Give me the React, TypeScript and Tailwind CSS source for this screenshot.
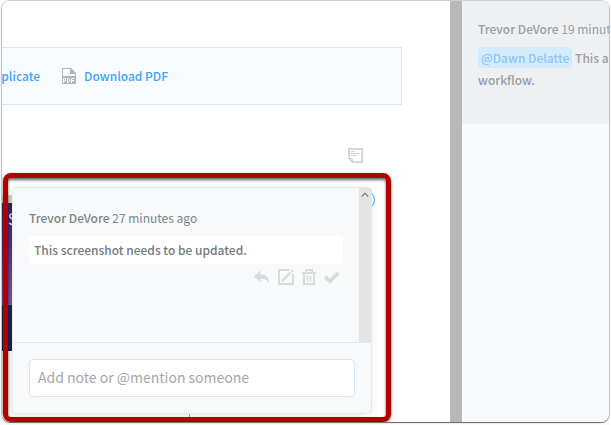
import { useState } from 'react';
import type { ReactNode } from 'react';

function PdfIcon() {
  return (
    <svg width="14" height="16" viewBox="0 0 14 16" aria-hidden="true">
      <path fill="#b3b5b8" d="M0 0h9l5 5v11H0z" />
      <path fill="#f9fcfe" d="M1 1h7v5h5v2H1z" />
      <path fill="none" stroke="#fff" strokeWidth="1" d="M1.5 15v-4.500h2v2.500h-2M5.500 10.500v4h1l1-1v-2l-1-1zM9.500 15v-4.500h3M9.500 12.500H12" />
    </svg>
  );
}

function NoteIcon() {
  return (
    <svg width="15" height="15" viewBox="0 0 15 15" fill="none" stroke="#d2d2d2" aria-hidden="true">
      <path strokeWidth="1.8" d="M.9.9h13.2v13.2H4.8L.9 10.2z" />
      <path strokeWidth="1" d="M1 10.5h3.5V14" />
      <path strokeWidth="1" d="M3 3.5h4M3 5.5h8M3 7.5h6" />
    </svg>
  );
}

function ReplyIcon() {
  return (
    <svg width="16" height="14" viewBox="0 0 16 14" fill="currentColor" aria-hidden="true">
      <path d="M0 6.500 6.500.5v3.700C12 4.300 15 7 15.500 13.500 13.500 9.800 10.500 8.800 6.500 8.800v3.700z" />
    </svg>
  );
}

function EditIcon() {
  return (
    <svg width="16" height="16" viewBox="0 0 16 16" fill="none" stroke="currentColor" aria-hidden="true">
      <path strokeWidth="2" d="M11 1H1v14h14V5" />
      <path strokeWidth="2.400" d="m4.500 11.500 8-8" />
      <path fill="currentColor" stroke="none" d="m3 13 .8-3 2.200 2.200zM12.500 2 14 .4 15.600 2 14 3.500z" />
    </svg>
  );
}

function TrashIcon() {
  return (
    <svg width="14" height="16" viewBox="0 0 14 16" fill="none" stroke="currentColor" aria-hidden="true">
      <path strokeWidth="2" d="M0 4h14M2 4v11h10V4" />
      <path strokeWidth="2" d="M4 3.500V1h6v2.500" />
      <path strokeWidth="1.500" d="M5.500 6.500v6M8.500 6.500v6" />
    </svg>
  );
}

function CheckIcon() {
  return (
    <svg width="16" height="13" viewBox="0 0 16 13" fill="currentColor" aria-hidden="true">
      <path d="m0 7.200 2.600-2.600 3.200 3.100L13 .5 15.800 3 5.900 12.700z" />
    </svg>
  );
}

function IconButton({ label, children }: { label: string; children: ReactNode }) {
  return (
    <button type="button" aria-label={label} className="flex h-4 items-center justify-center text-[#dadcdc]">
      {children}
    </button>
  );
}

function NotePopup() {
  const [note, setNote] = useState('');

  return (
    <section className="absolute top-[186px] left-[10px] w-[360px] rounded-sm border border-[#e3ebee] bg-[#f7f9fb] shadow-[0_0_14px_rgba(0,0,0,0.06)]">
      <div className="flex h-[154px]">
        <div className="flex-1 pt-5 pr-4 pl-4">
          <p className="leading-5 text-[#7b8585]">
            Trevor DeVore{' '}
            <span className="font-normal">27 minutes ago</span>
          </p>
          <p className="mt-2 rounded-sm bg-white px-[5px] py-1 leading-5 text-[#747c7c]">
            This screenshot needs to be updated.
          </p>
          <div className="mt-[5px] flex justify-end gap-2 pr-[3px]">
            <IconButton label="Reply"><ReplyIcon /></IconButton>
            <IconButton label="Edit"><EditIcon /></IconButton>
            <IconButton label="Delete"><TrashIcon /></IconButton>
            <IconButton label="Resolve"><CheckIcon /></IconButton>
          </div>
        </div>
        <div className="flex w-3 justify-center bg-[#e4e4e4] pt-1">
          <svg width="8" height="5" viewBox="0 0 8 5" fill="none" stroke="#888" strokeWidth="1.300" aria-hidden="true">
            <path d="m.8 4.500 3.200-3.300 3.200 3.300" />
          </svg>
        </div>
      </div>
      <div className="border-t border-[#e1e8eb] p-4">
        <input
          type="text"
          aria-label="Add note"
          placeholder="Add note or @mention someone"
          value={note}
          onChange={(e) => setNote(e.target.value)}
          className="block h-[38px] w-full rounded-sm border border-[#d2e9f8] bg-white px-2 pb-0.5 text-[14px] font-normal text-[#626b6b] placeholder:text-[#a4a8ac]"
        />
      </div>
    </section>
  );
}

function MainPane() {
  return (
    <main className="relative min-w-0 flex-1 overflow-hidden bg-white">
      <div className="mt-[46px] mr-12 flex h-[58px] items-center border border-l-0 border-[#d3e9f9] bg-[#f9fcfe] text-[#3ba5fa]">
        <a href="#duplicate" className="flex w-[38px] shrink-0 justify-end">Duplicate</a>
        <a href="#pdf" className="ml-[22px] flex items-center gap-2">
          <PdfIcon />
          Download PDF
        </a>
      </div>
      <div className="mt-[43px] mr-[87px] flex justify-end">
        <button type="button" aria-label="Show notes"><NoteIcon /></button>
      </div>
      {/* screenshot in the article, mostly hidden by the popup */}
      <div className="mt-8 w-[360px]">
        <div className="h-2 bg-[#d0d0d0]" />
        <div className="h-[102px] bg-linear-to-b from-[#352768] from-5% via-[#4f3289] via-40% to-[#8052a3]" />
        <div className="h-[46px] bg-[#182550]" />
        <div className="h-[72px] bg-[#f8f8f7]" />
      </div>
      <svg className="absolute top-[210px] left-[4px] text-[#d9c8ea]" width="9" height="18" viewBox="0 0 9 18" fill="none" stroke="currentColor" strokeWidth="1.600" aria-hidden="true">
        <path d="M9 4C6 2 3 3 4 6s5 1 5 5-3 3-6 1" />
      </svg>
      <div className="absolute top-[189px] left-[353px] size-5 rounded-full border border-[#4aa8f5]" />
      <div className="absolute top-[413px] left-[187px] h-3 w-px bg-[#999]" />
      <NotePopup />
      <div className="pointer-events-none absolute top-[172px] left-px h-[249px] w-[388px] rounded-lg border-[5px] border-[#b20000] shadow-[0_1px_3px_rgba(0,0,0,0.6),inset_0_2px_3px_rgba(0,0,0,0.6)]" />
    </main>
  );
}

function Sidebar() {
  return (
    <aside className="w-[147px] shrink-0 overflow-hidden bg-[#f7f9fb]">
      <article className="h-[123px] bg-[#edf1f4] pt-[18px] pl-4 text-[#9b9ea0]">
        <div className="w-[240px]">
          <p className="leading-5">
            Trevor DeVore <span className="font-normal">19 minutes ago</span>
          </p>
          <p className="mt-2 leading-[22px]">
            <a href="#dawn" className="rounded-sm bg-[#d4ebfc] px-[3px] py-0.5 text-[#8bc7f7]">@Dawn Delatte</a> This all fits into the
            <br />
            workflow.
          </p>
        </div>
      </article>
    </aside>
  );
}

export default function App() {
  return (
    <div className="h-screen min-h-[425px] bg-[#fcfcfc] px-0.5 pt-px pb-[3px] font-['Noto_Sans_CJK_SC',sans-serif] text-[12px] font-medium">
      <div className="flex h-full overflow-hidden rounded-lg shadow-[0_0_1px_1px_rgba(0,0,0,0.2),0_1px_1px_rgba(0,0,0,0.5)]">
        <MainPane />
        <div className="w-3 shrink-0 bg-[#b8b8b8]" />
        <Sidebar />
      </div>
    </div>
  );
}
